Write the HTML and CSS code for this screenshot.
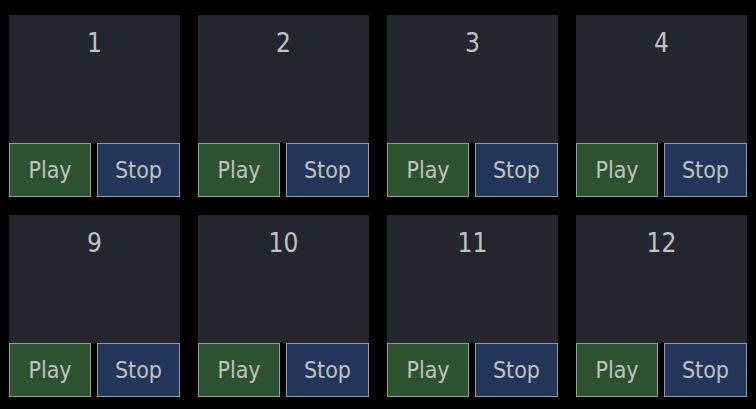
FILE: index.html
```html
<!DOCTYPE html>
<html lang="en">
<head>
  <meta charset="UTF-8">
  <title>Players</title>
  <link rel="stylesheet" href="styles.css">
</head>
<body>
  <div class="grid">
    <div class="player">
      <div class="player-title">1</div>
      <div class="controls"><button class="play">Play</button><button class="stop">Stop</button></div>
    </div>
    <div class="player">
      <div class="player-title">2</div>
      <div class="controls"><button class="play">Play</button><button class="stop">Stop</button></div>
    </div>
    <div class="player">
      <div class="player-title">3</div>
      <div class="controls"><button class="play">Play</button><button class="stop">Stop</button></div>
    </div>
    <div class="player">
      <div class="player-title">4</div>
      <div class="controls"><button class="play">Play</button><button class="stop">Stop</button></div>
    </div>
    <div class="player">
      <div class="player-title">9</div>
      <div class="controls"><button class="play">Play</button><button class="stop">Stop</button></div>
    </div>
    <div class="player">
      <div class="player-title">10</div>
      <div class="controls"><button class="play">Play</button><button class="stop">Stop</button></div>
    </div>
    <div class="player">
      <div class="player-title">11</div>
      <div class="controls"><button class="play">Play</button><button class="stop">Stop</button></div>
    </div>
    <div class="player">
      <div class="player-title">12</div>
      <div class="controls"><button class="play">Play</button><button class="stop">Stop</button></div>
    </div>
  </div>
</body>
</html>
```

FILE: styles.css
```css
body {
  margin: 0;
  padding: 15px 9px;
  background: #000;
  font-family: 'DejaVu Sans Condensed', 'DejaVu Sans', sans-serif;
  font-stretch: condensed;
  color: #c2c2c2;
}

.grid {
  display: grid;
  grid-template-columns: repeat(4, 171px);
  column-gap: 18px;
  row-gap: 18px;
}

.player {
  display: flex;
  flex-direction: column;
}

.player-title {
  height: 128px;
  box-sizing: border-box;
  padding-top: 13px;
  background: #23262e;
  text-align: center;
  font-size: 26px;
  line-height: 30px;
}

.controls {
  display: flex;
  gap: 6px;
}

button {
  height: 54px;
  padding: 0;
  border: 1px solid #9a9a9a;
  font-family: 'DejaVu Sans Condensed', 'DejaVu Sans', sans-serif;
  font-stretch: condensed;
  font-size: 23px;
  color: #c2c2c2;
  cursor: pointer;
}

.play {
  width: 82px;
  background: #2d5230;
}

.stop {
  width: 83px;
  background: #22355a;
}
```
